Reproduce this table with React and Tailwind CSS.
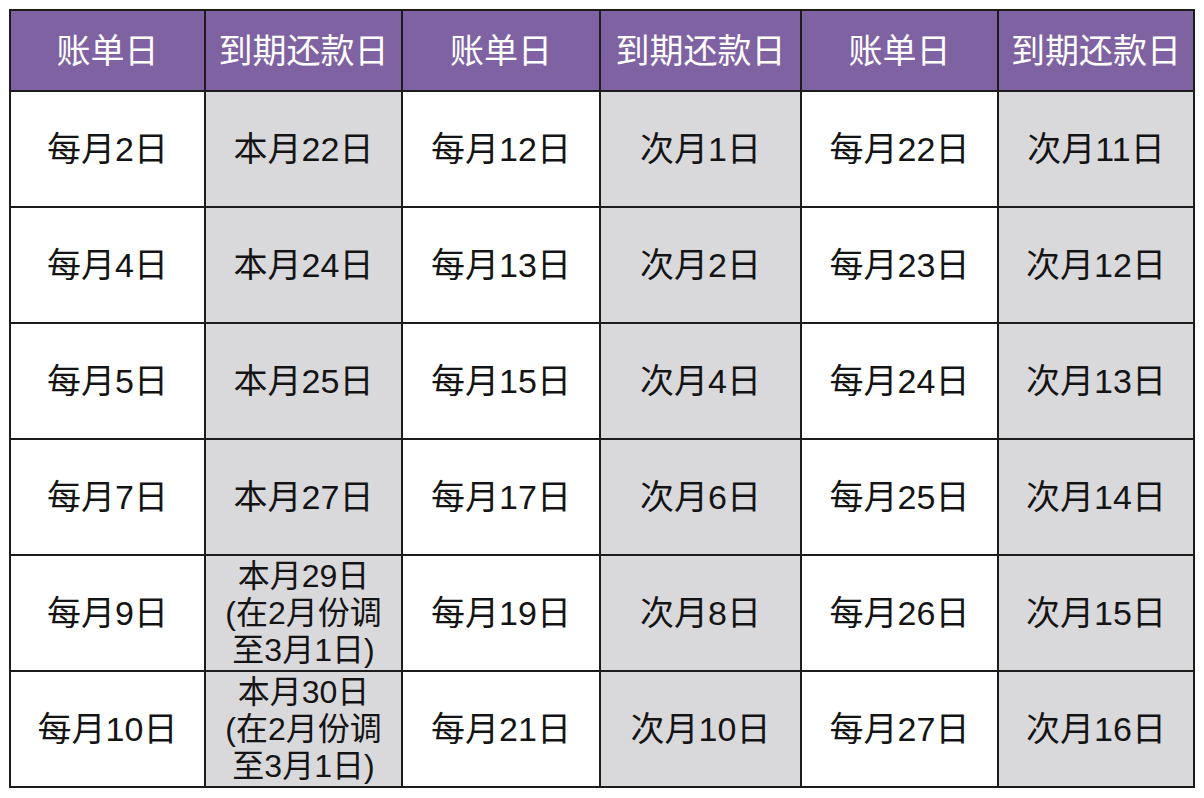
import React from "react";

const rows = [
  ["每月2日", "本月22日", "每月12日", "次月1日", "每月22日", "次月11日"],
  ["每月4日", "本月24日", "每月13日", "次月2日", "每月23日", "次月12日"],
  ["每月5日", "本月25日", "每月15日", "次月4日", "每月24日", "次月13日"],
  ["每月7日", "本月27日", "每月17日", "次月6日", "每月25日", "次月14日"],
  ["每月9日", ["本月29日", "(在2月份调", "至3月1日)"], "每月19日", "次月8日", "每月26日", "次月15日"],
  ["每月10日", ["本月30日", "(在2月份调", "至3月1日)"], "每月21日", "次月10日", "每月27日", "次月16日"],
];

const headers = ["账单日", "到期还款日", "账单日", "到期还款日", "账单日", "到期还款日"];

const font = { fontFamily: '"Liberation Sans", "Noto Sans CJK SC", sans-serif' };

export default function App() {
  return (
    <div className="w-[1204px] h-[798px] bg-white pt-[9px] pl-[9px]" style={font}>
      <div className="grid grid-cols-[193px_195px_196px_199px_195px_194px] grid-rows-[79px_114px_114px_114px_114px_114px_114px] gap-[2px] p-[2px] bg-[#1c1c1c] w-[1186px]">
        {headers.map((h, i) => (
          <div key={"h" + i} className="bg-[#7f62a2] text-white text-[34px] flex items-center justify-center leading-none">
            {h}
          </div>
        ))}
        {rows.map((r, ri) =>
          r.map((c, ci) => (
            <div
              key={ri + "-" + ci}
              className={
                (ci % 2 === 1 ? "bg-[#d9d8db]" : "bg-white") +
                " text-[#141414] flex flex-col items-center justify-center"
              }
            >
              {Array.isArray(c) ? (
                c.map((l, li) => (
                  <div key={li} className="text-[32px] leading-[37px]">
                    {l}
                  </div>
                ))
              ) : (
                <div className="text-[34px] leading-none">{c}</div>
              )}
            </div>
          ))
        )}
      </div>
    </div>
  );
}
